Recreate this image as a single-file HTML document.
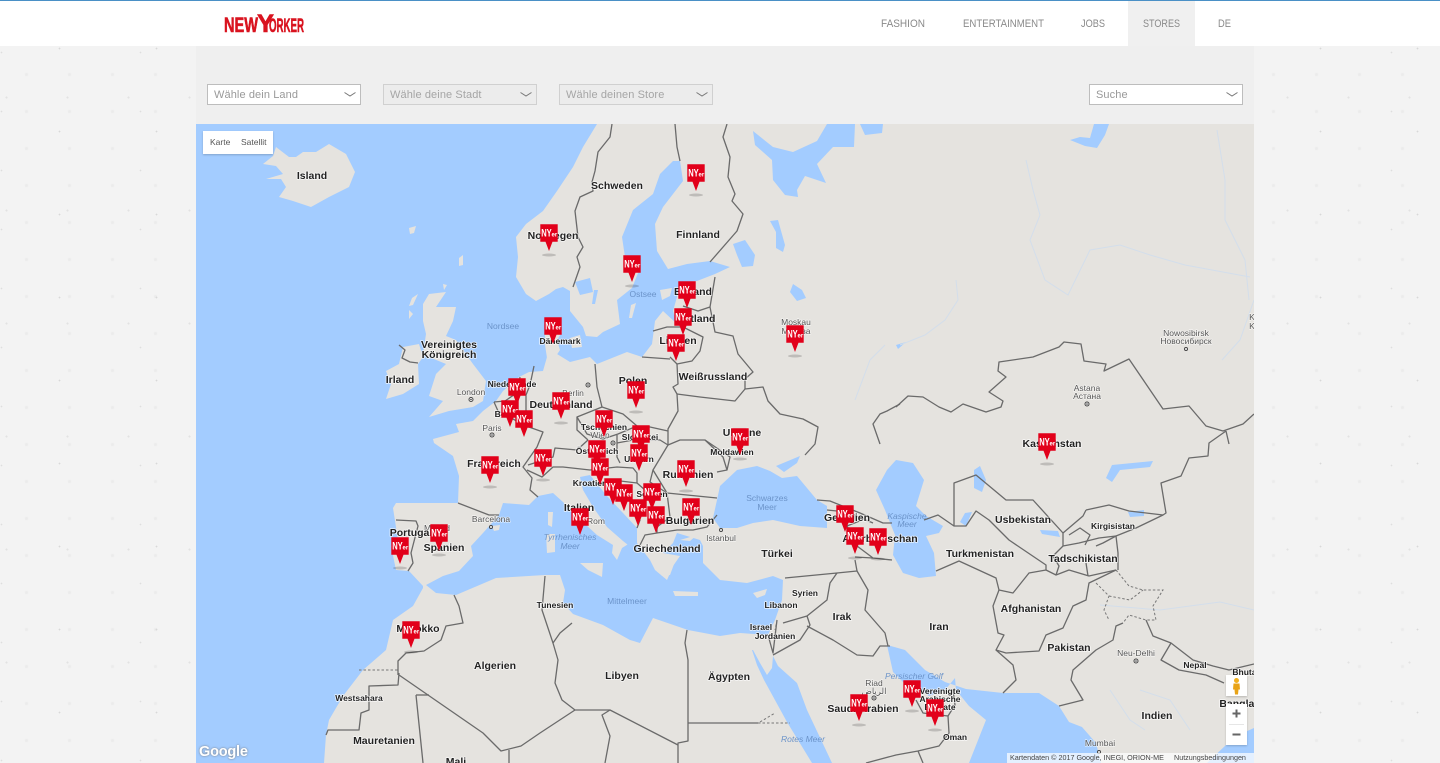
<!DOCTYPE html>
<html lang="de"><head><meta charset="utf-8"><title>NEW YORKER Stores</title>
<style>
html,body{margin:0;padding:0;width:1440px;height:763px;overflow:hidden}
body{position:relative;font-family:"Liberation Sans","Noto Sans CJK SC",sans-serif;background-color:#f3f3f3;
background-image:radial-gradient(circle,#d8d8d8 0,#d8d8d8 .7px,transparent 1px),radial-gradient(circle,#e2e2e2 0,#e2e2e2 .8px,transparent 1.2px),radial-gradient(circle,#dedede 0,#dedede .6px,transparent 1px),radial-gradient(circle,#ebebeb 0,#ebebeb 1.2px,transparent 2px);
background-size:97px 83px,61px 113px,139px 59px,43px 37px;background-position:11px 7px,37px 41px,71px 23px,5px 19px}
#hd{position:absolute;left:0;top:0;width:1440px;height:46px;background:#fff;border-top:1px solid #4a90c6;box-sizing:border-box}
#col{position:absolute;left:196px;top:46px;width:1058px;height:78px;background:#efefef}
#act{position:absolute;left:1128px;top:1px;width:67px;height:45px;background:#f0f0f0}
.sel{position:absolute;top:84px;width:154px;height:21px;box-sizing:border-box;border:1px solid #bdbdbd;background:#fff;color:#999;font-size:11px;line-height:20px;padding-left:6px;letter-spacing:.1px}
.sel.dis{background:#ececec;border-color:#d0d0d0;color:#a5a5a5}
.sel svg{position:absolute;right:4px;top:7px}
#map{position:absolute;left:196px;top:124px;width:1058px;height:639px;display:block;background:#e5e3df}
#map text{font-family:"Liberation Sans","Noto Sans CJK SC",sans-serif;text-anchor:middle;paint-order:stroke;stroke-linejoin:round}
#map .c{font-size:10.5px;font-weight:bold;fill:#222;stroke:#fff;stroke-width:1.6px;stroke-opacity:.75}
#map .s{font-size:8.5px;font-weight:bold;fill:#222;stroke:#fff;stroke-width:1.6px;stroke-opacity:.75}
#map .g{font-size:8.5px;fill:#555;stroke:#fff;stroke-width:1.4px;stroke-opacity:.6}
#map .w{font-size:8.5px;fill:#6b93c9}
.l{fill:#e5e3df;stroke:none}.a{fill:#a3ccff;stroke:none}
.b{fill:none;stroke:#6a6a6a;stroke-width:1.3;stroke-linejoin:round}
.dsh{fill:none;stroke:#777;stroke-width:1;stroke-dasharray:2.5 2}
.r{fill:none;stroke:#d3deeb;stroke-width:1}
.p{fill:#e2001a}
#map .n{font-size:11px;font-weight:bold;fill:#fff;text-anchor:start;stroke:none}
#map .t{font-size:6px;font-weight:bold;fill:#fff;text-anchor:start;stroke:none}
.ctl{position:absolute;background:#fff;box-shadow:0 1px 2px rgba(0,0,0,.2)}
</style></head><body>
<div id="hd"></div><div id="act"></div><div id="col"></div>

<svg style="position:absolute;left:0;top:0" width="1440" height="46">
<g font-family="Liberation Sans" font-weight="bold" fill="#d9131f" stroke="#d9131f" stroke-width=".6">
<text x="224" y="32" font-size="21" textLength="34" lengthAdjust="spacingAndGlyphs">NEW</text>
<text x="257" y="32" font-size="25" textLength="17" lengthAdjust="spacingAndGlyphs">Y</text>
<text x="269" y="32" font-size="19" textLength="35" lengthAdjust="spacingAndGlyphs">ORKER</text>
</g>
<g font-family="Liberation Sans" font-size="11" fill="#8a8a8a">
<text x="881" y="27" textLength="44" lengthAdjust="spacingAndGlyphs">FASHION</text>
<text x="963" y="27" textLength="81" lengthAdjust="spacingAndGlyphs">ENTERTAINMENT</text>
<text x="1081" y="27" textLength="24" lengthAdjust="spacingAndGlyphs">JOBS</text>
<text x="1143" y="27" textLength="37" lengthAdjust="spacingAndGlyphs">STORES</text>
<text x="1218" y="27" textLength="13" lengthAdjust="spacingAndGlyphs">DE</text>
</g></svg>

<div class="sel" style="left:207px">Wähle dein Land<svg width="12" height="6"><path d="M.5.5 6 4 11.5.5" fill="none" stroke="#777"/></svg></div>
<div class="sel dis" style="left:383px">Wähle deine Stadt<svg width="12" height="6"><path d="M.5.5 6 4 11.5.5" fill="none" stroke="#777"/></svg></div>
<div class="sel dis" style="left:559px">Wähle deinen Store<svg width="12" height="6"><path d="M.5.5 6 4 11.5.5" fill="none" stroke="#777"/></svg></div>
<div class="sel" style="left:1089px">Suche<svg width="12" height="6"><path d="M.5.5 6 4 11.5.5" fill="none" stroke="#777"/></svg></div>

<svg id="map" viewBox="196 124 1058 639" width="1058" height="639">
<!-- water -->
<path class="a" d="M196 124H597L583 147 573 167 557 191 543 211 526 224 516 237 518 257 516 277 526 294 536 301 549 294 556 289 563 287 570 291 570 311 583 327 586 336 597 337 603 332 620 324 617 300 632 288 640 268 625 257 622 237 633 210 653 194 660 174 673 161 680 161 683 181 663 207 655 224 657 251 668 269 687 264 710 261 730 267 715 274 697 281 680 282 677 297 673 311 677 324 663 311 655 321 652 344 642 357 627 352 597 364 590 357 570 362 557 354 547 357 543 371 529 372 519 377 503 391 496 401 483 411 473 421 456 424 459 432 433 439 434 443 453 456 459 476 458 503 429 503 396 503 393 508 398 540 391 546 396 570 409 571 423 586 423 588 413 606 393 620 386 650 363 670 343 696 329 720 326 735 324 763H196Z"/>
<path class="a" d="M426 585 443 576 459 571 473 556 471 546 483 533 499 515 503 503 529 505 538 496 553 493 563 502 573 513 597 535 613 545 612 553 617 560 622 548 630 543 633 549 623 541 607 527 593 507 583 490 580 477 590 475 598 485 607 496 623 513 637 528 637 543 650 560 655 570 667 580 673 566 680 556 663 553 673 543 677 533 700 540 703 546 703 563 720 580 747 583 773 576 783 580 782 600 775 620 768 635 740 633 720 636 688 630 653 618 640 643 630 640 603 625 573 614 563 603 565 590 560 575 545 575 496 578 456 595 436 593Z"/>
<path class="a" d="M737 470 757 466 770 471 782 478 797 476 817 500 827 506 827 528 800 526 773 520 753 523 737 528 720 528 713 518 717 500 720 486Z"/>
<path class="a" d="M776 466 800 456 797 463 784 472Z"/>
<path class="a" d="M752 650 757 665 764 680 787 722 812 763H832L807 710 797 683 778 666 773 656 772 668 767 675 760 663 753 650Z"/>
<path class="a" d="M876 490 887 470 896 460 913 463 924 480 916 506 926 516 943 526 939 533 926 536 934 553 936 576 919 578 903 573 893 555 895 535 885 510Z"/>
<path class="a" d="M887 645 905 650 925 670 945 682 966 689 1003 693 1039 693 1059 706 1069 722 1082 727 1096 743 1101 763H969L986 720 969 706 956 690 955 678 945 690 929 696 918 688 905 684 893 672Z"/>
<path class="a" d="M1207 763 1226 745 1245 732 1254 728V763Z"/>
<path class="a" d="M753 131 773 147 793 152 817 141 827 124H855L854 147 833 147 817 164 826 183 805 176 797 190 798 197 785 195 773 180 772 160 755 145Z"/>
<path class="a" d="M860 124H883L882 133 865 135Z"/>
<path class="a" d="M733 244 745 240 755 255 753 266 742 267 737 255Z"/>
<path class="a" d="M770 221 778 220 785 245 783 252 776 248 776 232Z"/>
<path class="a" d="M793 284 802 290 806 298 797 301 790 292Z"/>
<path class="a" d="M1094 124 1109 124 1105 135 1097 148 1085 146 1070 140 1080 137 1090 138Z"/>
<path class="a" d="M575 282 590 278 593 292 580 295Z"/>
<path class="a" d="M594 290 598 290 595 304 592 304Z"/>
<path class="a" d="M974 470 980 466 986 480 982 492 974 488Z"/>
<path class="a" d="M1106 478 1112 465 1153 461 1150 467 1120 470 1112 482Z"/>
<path class="a" d="M1128 512 1144 510 1144 516 1130 517Z"/>
<path class="a" d="M960 522 965 513 972 512 966 526Z"/>
<path class="a" d="M1040 530 1058 531 1060 537 1042 534Z"/>
<path class="a" d="M896 345 906 342 898 349Z"/>
<!-- land islands -->
<path class="l" d="M263 164 273 156 276 147 289 157 296 157 303 152 316 152 329 144 346 154 355 172 349 187 329 197 311 207 293 201 279 197 286 187 281 179 266 179 283 174 276 166Z"/>
<path class="l" d="M429 294 446 292 436 307 456 307 453 321 446 336 456 340 473 364 486 381 483 401 473 407 449 411 429 417 443 401 429 396 436 374 446 364 429 357 423 354 426 334 423 321 423 304Z"/>
<path class="l" d="M403 347 419 344 423 357 418 364 419 384 403 394 386 399 391 384 386 371 399 364Z"/>
<path class="l" d="M412 298 418 294 413 305 409 306Z"/>
<path class="l" d="M409 310 413 314 409 319Z"/>
<path class="l" d="M443 284 447 285 444 290Z"/>
<path class="l" d="M409 228 416 226 414 233 410 234Z"/>
<path class="l" d="M459 258 463 255 463 265 459 266Z"/>
<path class="l" d="M545 322 558 318 562 332 557 340 560 350 556 356 547 358 545 345Z"/>
<path class="l" d="M570 338 580 335 582 347 572 348Z"/>
<path class="l" d="M631 305 636 303 632 318 629 318Z"/>
<path class="l" d="M660 290 672 288 670 296 662 300Z"/>
<path class="l" d="M548 512 553 512 552 527 548 525Z"/>
<path class="l" d="M546 534 555 534 555 552 547 553Z"/>
<path class="l" d="M580 563 603 563 602 577 588 570Z"/>
<path class="l" d="M673 591 698 592 698 596 675 596Z"/>
<path class="l" d="M753 593 767 589 765 595 757 598Z"/>
<path class="l" d="M492 526 500 525 499 530 494 531Z"/>
<path class="l" d="M654 565 668 556 677 556 670 575 662 576Z"/>
<path class="l" d="M680 540 697 535 690 541Z"/>
<!-- rivers -->
<path class="r" d="M1026 160 1033 190 1040 215 1030 240 1045 280 1068 295 1090 250 1120 245 1150 255 1185 265 1250 277"/>
<path class="r" d="M1217 130 1225 180 1225 220 1245 260 1249 300"/>
<path class="r" d="M956 280 958 300 945 320 925 335 900 345"/>
<path class="r" d="M855 400 870 360 885 345"/>
<path class="r" d="M1100 605 1160 610 1220 602 1254 610"/>
<path class="r" d="M1140 690 1170 700 1190 730"/>
<path class="r" d="M1110 690 1130 720 1145 730"/>
<path class="r" d="M1254 300 1240 340 1222 360"/>
<!-- borders -->
<g>
<polyline class="b" points="612,124 610,137 598,152 595,171 592,182 593,191 580,197 575,211 578,237 583,247 577,257 580,267 573,287"/>
<polyline class="b" points="675,124 677,147 680,161"/>
<polyline class="b" points="727,124 723,137 730,157 728,177 735,194 732,201 743,214 737,231 710,262"/>
<polyline class="b" points="715,277 710,307 715,332 733,336 738,354 753,372 745,379 745,389 763,387 768,401 780,414 803,419 818,427 815,444 805,455"/>
<polyline class="b" points="683,306 698,311 710,307"/>
<polyline class="b" points="653,331 667,327 683,327 703,337 700,351 692,361 677,364 670,357"/>
<polyline class="b" points="642,357 670,359"/>
<polyline class="b" points="677,364 678,384 673,387 677,394 678,411 668,429 668,445"/>
<polyline class="b" points="677,394 700,397 735,401 745,389"/>
<polyline class="b" points="900,404 887,411 880,414 873,424 880,444"/>
<polyline class="b" points="896,407 908,396 923,397 939,407 951,412 963,404 986,412 1001,407 1003,401 989,392 1006,377 998,371 999,362 1033,357 1059,347 1064,342 1081,344 1084,361 1106,364 1104,371 1129,359 1163,409 1189,406 1206,426 1223,431 1243,424 1254,414"/>
<polyline class="b" points="1226,431 1209,443 1208,456 1189,458 1181,476 1161,483 1166,513 1163,515 1136,528 1116,536 1103,543 1096,546"/>
<polyline class="b" points="1226,431 1229,444"/>
<polyline class="b" points="1086,510 1109,505 1129,511 1163,515"/>
<polyline class="b" points="954,526 954,483 976,475 1006,500 1033,500 1063,533 1083,516 1086,510"/>
<polyline class="b" points="924,520 938,515 954,526 966,526 976,511 989,520 1009,540 1046,565 1046,570 1056,575 1069,570 1089,576 1116,570"/>
<polyline class="b" points="936,571 959,561 996,578 999,590 1013,593 1029,573 1046,570"/>
<polyline class="b" points="999,590 993,606 998,633 1004,635 996,650 1006,653 1039,651 1046,635 1063,628 1073,606 1086,600 1089,583 1116,570"/>
<polyline class="b" points="996,650 1013,665 1016,680 1003,693"/>
<polyline class="b" points="1063,533 1063,546 1053,556 1059,566 1056,575"/>
<polyline class="b" points="1063,546 1079,543 1099,538 1116,536 1118,553 1118,570"/>
<polyline class="b" points="1069,535 1080,528 1090,535 1085,545"/>
<polyline class="b" points="1086,563 1088,576"/>
<polyline class="b" points="1123,623 1116,626 1113,640 1096,650 1073,670 1071,680 1083,700 1059,706"/>
<polyline class="b" points="1146,620 1153,636 1171,643 1193,660 1213,666 1229,670 1254,664"/>
<polyline class="b" points="1171,643 1161,660 1179,670 1206,675 1224,683"/>
<polyline class="dsh" points="1116,570 1129,586 1143,590 1163,590 1153,606 1156,620 1146,620 1129,615 1123,623"/>
<polyline class="dsh" points="1096,583 1109,596 1104,610 1109,620"/>
<polyline class="dsh" points="1109,596 1130,600 1143,590"/>
<polyline class="b" points="916,700 923,713 948,716 949,733 939,746 918,751 896,755 866,763"/>
<polyline class="b" points="918,751 923,763"/>
<polyline class="b" points="948,716 955,705 953,690"/>
<polyline class="b" points="807,626 833,640 857,655 873,656 880,646 890,646"/>
<polyline class="b" points="807,616 827,600 830,583 837,573 785,578"/>
<polyline class="b" points="807,616 810,625 800,640 773,655"/>
<polyline class="b" points="783,623 807,616"/>
<polyline class="b" points="837,573 857,571 855,560"/>
<polyline class="b" points="857,571 868,590 865,610 885,633 888,646"/>
<polyline class="b" points="768,635 773,653 777,620"/>
<polyline class="dsh" points="777,620 775,630"/>
<polyline class="b" points="687,630 685,643 688,660 688,741 678,743 678,763"/>
<polyline class="b" points="688,723 758,723"/>
<polyline class="dsh" points="758,723 790,723"/>
<polyline class="dsh" points="760,722 775,713"/>
<polyline class="b" points="678,745 610,710 602,715 610,736 605,763"/>
<polyline class="b" points="610,710 575,710 562,700 555,683 558,660 553,643 560,633 572,623"/>
<polyline class="b" points="545,576 542,610 553,643"/>
<polyline class="b" points="575,710 540,733 521,746 501,751 483,733 399,675"/>
<polyline class="b" points="416,695 429,695"/>
<polyline class="b" points="416,695 423,763"/>
<polyline class="b" points="509,750 509,763"/>
<polyline class="b" points="399,673 398,685 369,686 369,710 361,713 359,730 328,730 326,735"/>
<polyline class="dsh" points="359,670 398,670"/>
<polyline class="b" points="454,595 459,606 463,623 446,626 441,640 424,651 406,653 398,661 398,675"/>
<polyline class="b" points="458,503 489,515 499,515"/>
<polyline class="b" points="396,520 416,521 418,526 411,553 413,563 408,571"/>
<polyline class="b" points="494,402 498,411 526,426 543,432 537,447 523,467 532,478 530,490 538,497"/>
<polyline class="b" points="528,465 553,457 555,448 577,450 588,440"/>
<polyline class="b" points="527,470 542,477 553,467 563,467 590,470 617,467 633,468 637,473 637,483 653,497"/>
<polyline class="b" points="520,377 518,392 505,401 494,402"/>
<polyline class="b" points="534,366 530,385 526,395 526,426"/>
<polyline class="b" points="595,364 597,387 602,407 623,414 637,426 650,427 668,431"/>
<polyline class="b" points="602,407 577,417 587,434 603,439 618,434 637,426"/>
<polyline class="b" points="577,417 577,430 588,440"/>
<polyline class="b" points="617,435 617,457 620,463"/>
<polyline class="b" points="617,443 633,440 660,440 668,445 653,470 667,493 717,498"/>
<polyline class="b" points="668,445 680,440 705,440 723,457 727,470 717,472"/>
<polyline class="b" points="705,440 730,457 727,470"/>
<polyline class="b" points="653,470 650,482 667,493 670,517 657,527 657,533 677,530 693,530 707,527 717,515"/>
<polyline class="b" points="598,485 612,480 637,483"/>
<polyline class="b" points="623,490 637,505 640,520 637,528"/>
<polyline class="b" points="657,533 645,535 640,545"/>
<polyline class="b" points="817,500 830,501 860,513 883,523 892,523"/>
<polyline class="b" points="827,510 847,512 873,523"/>
<polyline class="b" points="847,526 857,546 873,558 892,560"/>
<polyline class="b" points="847,526 862,520"/>
<polyline class="b" points="855,557 873,558"/>
<polyline class="b" points="399,345 405,350 402,358 410,362 418,363"/>
</g>
<!-- labels -->
<text class="c" x="312" y="179">Island</text>
<text class="c" x="617" y="189">Schweden</text>
<text class="c" x="553" y="239">Norwegen</text>
<text class="c" x="698" y="238">Finnland</text>
<text class="c" x="693" y="295">Estland</text>
<text class="c" x="695" y="322">Lettland</text>
<text class="c" x="678" y="344">Litauen</text>
<text class="c" x="713" y="380">Weißrussland</text>
<text class="c" x="633" y="384">Polen</text>
<text class="s" x="560" y="344">Dänemark</text>
<text class="c" x="449" y="348">Vereinigtes</text>
<text class="c" x="449" y="358">Königreich</text>
<text class="c" x="400" y="383">Irland</text>
<text class="s" x="512" y="387">Niederlande</text>
<text class="g" x="471" y="395">London</text>
<text class="g" x="492" y="431">Paris</text>
<text class="g" x="573" y="396">Berlin</text>
<text class="c" x="561" y="408">Deutschland</text>
<text class="s" x="510" y="417">Belgien</text>
<text class="s" x="604" y="430">Tschechien</text>
<text class="g" x="600" y="438">Wien</text>
<text class="s" x="597" y="454">Österreich</text>
<text class="s" x="640" y="440">Slowakei</text>
<text class="s" x="639" y="462">Ungarn</text>
<text class="s" x="732" y="455">Moldawien</text>
<text class="c" x="742" y="436">Ukraine</text>
<text class="c" x="494" y="467">Frankreich</text>
<text class="c" x="688" y="478">Rumänien</text>
<text class="s" x="590" y="486">Kroatien</text>
<text class="s" x="652" y="497">Serbien</text>
<text class="c" x="579" y="511">Italien</text>
<text class="g" x="596" y="524">Rom</text>
<text class="g" x="491" y="522">Barcelona</text>
<text class="c" x="444" y="551">Spanien</text>
<text class="g" x="437" y="531">Madrid</text>
<text class="c" x="411" y="536">Portugal</text>
<text class="c" x="667" y="552">Griechenland</text>
<text class="c" x="690" y="524">Bulgarien</text>
<text class="g" x="721" y="541">Istanbul</text>
<text class="c" x="777" y="557">Türkei</text>
<text class="c" x="847" y="521">Georgien</text>
<text class="c" x="880" y="542">Aserbaidschan</text>
<text class="s" x="805" y="596">Syrien</text>
<text class="s" x="781" y="608">Libanon</text>
<text class="s" x="761" y="630">Israel</text>
<text class="s" x="775" y="639">Jordanien</text>
<text class="c" x="842" y="620">Irak</text>
<text class="c" x="939" y="630">Iran</text>
<text class="c" x="980" y="557">Turkmenistan</text>
<text class="c" x="1023" y="523">Usbekistan</text>
<text class="s" x="1113" y="529">Kirgisistan</text>
<text class="c" x="1083" y="562">Tadschikistan</text>
<text class="c" x="1052" y="447">Kasachstan</text>
<text class="c" x="1031" y="612">Afghanistan</text>
<text class="c" x="1069" y="651">Pakistan</text>
<text class="g" x="1136" y="656">Neu-Delhi</text>
<text class="s" x="1195" y="668">Nepal</text>
<text class="s" x="1247" y="675">Bhutan</text>
<text class="c" x="1252" y="707">Bangladesch</text>
<text class="c" x="1157" y="719">Indien</text>
<text class="g" x="1100" y="746">Mumbai</text>
<text class="g" x="796" y="325">Moskau</text>
<text class="g" x="796" y="334">Москва</text>
<text class="g" x="1087" y="391">Astana</text>
<text class="g" x="1087" y="399">Астана</text>
<text class="g" x="1186" y="336">Nowosibirsk</text>
<text class="g" x="1186" y="344">Новосибирск</text>
<text class="g" x="1252" y="320">K</text>
<text class="g" x="1252" y="329">K</text>
<text class="c" x="729" y="680">Ägypten</text>
<text class="c" x="622" y="679">Libyen</text>
<text class="c" x="495" y="669">Algerien</text>
<text class="s" x="555" y="608">Tunesien</text>
<text class="s" x="359" y="701">Westsahara</text>
<text class="c" x="384" y="744">Mauretanien</text>
<text class="c" x="456" y="765">Mali</text>
<text class="c" x="418" y="632">Marokko</text>
<text class="c" x="863" y="712">Saudi-Arabien</text>
<text class="g" x="874" y="686">Riad</text>
<text class="g" x="874" y="694">الرياض</text>
<text class="s" x="940" y="694">Vereinigte</text>
<text class="s" x="940" y="702">Arabische</text>
<text class="s" x="940" y="710">Emirate</text>
<text class="s" x="955" y="740">Oman</text>
<text class="w" x="503" y="329">Nordsee</text>
<text class="w" x="643" y="297">Ostsee</text>
<text class="w" x="570" y="540" font-style="italic">Tyrrhenisches</text>
<text class="w" x="570" y="549" font-style="italic">Meer</text>
<text class="w" x="627" y="604">Mittelmeer</text>
<text class="w" x="767" y="501">Schwarzes</text>
<text class="w" x="767" y="510">Meer</text>
<text class="w" x="907" y="519" font-style="italic">Kaspische</text>
<text class="w" x="907" y="527" font-style="italic">Meer</text>
<text class="w" x="914" y="679" font-style="italic">Persischer Golf</text>
<text class="w" x="803" y="742" font-style="italic">Rotes Meer</text>
<!-- city dots -->
<g fill="#fff" stroke="#444" stroke-width="1">
<circle cx="471" cy="399.5" r="2"/><circle cx="492" cy="435" r="2"/><circle cx="588" cy="385" r="2"/><circle cx="613" cy="443" r="2"/><circle cx="491" cy="527" r="1.5"/><circle cx="721" cy="530" r="1.5"/><circle cx="1087" cy="404" r="2"/><circle cx="1186" cy="349" r="1.5"/><circle cx="1136" cy="661" r="2"/><circle cx="874" cy="698" r="2"/><circle cx="1099" cy="752" r="1.5"/>
</g>
<g fill="#333"><circle cx="471" cy="399.5" r=".8"/><circle cx="492" cy="435" r=".8"/><circle cx="588" cy="385" r=".8"/><circle cx="613" cy="443" r=".8"/><circle cx="1087" cy="404" r=".8"/><circle cx="1136" cy="661" r=".8"/><circle cx="874" cy="698" r=".8"/></g>
<!-- pins -->
<g fill="#000" fill-opacity=".17">
<ellipse cx="696" cy="195" rx="7" ry="1.5"/><ellipse cx="549" cy="255" rx="7" ry="1.5"/><ellipse cx="632" cy="286" rx="7" ry="1.5"/><ellipse cx="795" cy="356" rx="7" ry="1.5"/><ellipse cx="636" cy="412" rx="7" ry="1.5"/><ellipse cx="561" cy="423" rx="7" ry="1.5"/><ellipse cx="490" cy="487" rx="7" ry="1.5"/><ellipse cx="543" cy="480" rx="7" ry="1.5"/><ellipse cx="686" cy="491" rx="7" ry="1.5"/><ellipse cx="740" cy="459" rx="7" ry="1.5"/><ellipse cx="439" cy="555" rx="7" ry="1.5"/><ellipse cx="400" cy="568" rx="7" ry="1.5"/><ellipse cx="411" cy="652" rx="7" ry="1.5"/><ellipse cx="1047" cy="464" rx="7" ry="1.5"/><ellipse cx="859" cy="725" rx="7" ry="1.5"/><ellipse cx="912" cy="711" rx="7" ry="1.5"/><ellipse cx="935" cy="730" rx="7" ry="1.5"/><ellipse cx="878" cy="559" rx="7" ry="1.5"/><ellipse cx="855" cy="558" rx="7" ry="1.5"/>
</g>
<g transform="translate(696,173)"><path class="p" d="M-8.7-8.700H8.700V8.700H3.500L0 18-3.500 8.700H-8.700Z"/><text class="n" x="-7.800" y="3.500" textLength="10.500" lengthAdjust="spacingAndGlyphs">NY</text><text class="t" x="2.500" y="3.500">er</text></g>
<g transform="translate(549,233)"><path class="p" d="M-8.7-8.700H8.700V8.700H3.500L0 18-3.500 8.700H-8.700Z"/><text class="n" x="-7.800" y="3.500" textLength="10.500" lengthAdjust="spacingAndGlyphs">NY</text><text class="t" x="2.500" y="3.500">er</text></g>
<g transform="translate(632,264)"><path class="p" d="M-8.7-8.700H8.700V8.700H3.500L0 18-3.500 8.700H-8.700Z"/><text class="n" x="-7.800" y="3.500" textLength="10.500" lengthAdjust="spacingAndGlyphs">NY</text><text class="t" x="2.500" y="3.500">er</text></g>
<g transform="translate(687,290)"><path class="p" d="M-8.7-8.700H8.700V8.700H3.500L0 18-3.500 8.700H-8.700Z"/><text class="n" x="-7.800" y="3.500" textLength="10.500" lengthAdjust="spacingAndGlyphs">NY</text><text class="t" x="2.500" y="3.500">er</text></g>
<g transform="translate(683,317)"><path class="p" d="M-8.7-8.700H8.700V8.700H3.500L0 18-3.500 8.700H-8.700Z"/><text class="n" x="-7.800" y="3.500" textLength="10.500" lengthAdjust="spacingAndGlyphs">NY</text><text class="t" x="2.500" y="3.500">er</text></g>
<g transform="translate(676,343)"><path class="p" d="M-8.7-8.700H8.700V8.700H3.500L0 18-3.500 8.700H-8.700Z"/><text class="n" x="-7.800" y="3.500" textLength="10.500" lengthAdjust="spacingAndGlyphs">NY</text><text class="t" x="2.500" y="3.500">er</text></g>
<g transform="translate(553,326)"><path class="p" d="M-8.7-8.700H8.700V8.700H3.500L0 18-3.500 8.700H-8.700Z"/><text class="n" x="-7.800" y="3.500" textLength="10.500" lengthAdjust="spacingAndGlyphs">NY</text><text class="t" x="2.500" y="3.500">er</text></g>
<g transform="translate(795,334)"><path class="p" d="M-8.7-8.700H8.700V8.700H3.500L0 18-3.500 8.700H-8.700Z"/><text class="n" x="-7.800" y="3.500" textLength="10.500" lengthAdjust="spacingAndGlyphs">NY</text><text class="t" x="2.500" y="3.500">er</text></g>
<g transform="translate(636,390)"><path class="p" d="M-8.7-8.700H8.700V8.700H3.500L0 18-3.500 8.700H-8.700Z"/><text class="n" x="-7.800" y="3.500" textLength="10.500" lengthAdjust="spacingAndGlyphs">NY</text><text class="t" x="2.500" y="3.500">er</text></g>
<g transform="translate(517,387)"><path class="p" d="M-8.7-8.700H8.700V8.700H3.500L0 18-3.500 8.700H-8.700Z"/><text class="n" x="-7.800" y="3.500" textLength="10.500" lengthAdjust="spacingAndGlyphs">NY</text><text class="t" x="2.500" y="3.500">er</text></g>
<g transform="translate(510,409)"><path class="p" d="M-8.7-8.700H8.700V8.700H3.500L0 18-3.500 8.700H-8.700Z"/><text class="n" x="-7.800" y="3.500" textLength="10.500" lengthAdjust="spacingAndGlyphs">NY</text><text class="t" x="2.500" y="3.500">er</text></g>
<g transform="translate(524,419)"><path class="p" d="M-8.7-8.700H8.700V8.700H3.500L0 18-3.500 8.700H-8.700Z"/><text class="n" x="-7.800" y="3.500" textLength="10.500" lengthAdjust="spacingAndGlyphs">NY</text><text class="t" x="2.500" y="3.500">er</text></g>
<g transform="translate(561,401)"><path class="p" d="M-8.7-8.700H8.700V8.700H3.500L0 18-3.500 8.700H-8.700Z"/><text class="n" x="-7.800" y="3.500" textLength="10.500" lengthAdjust="spacingAndGlyphs">NY</text><text class="t" x="2.500" y="3.500">er</text></g>
<g transform="translate(604,419)"><path class="p" d="M-8.7-8.700H8.700V8.700H3.500L0 18-3.500 8.700H-8.700Z"/><text class="n" x="-7.800" y="3.500" textLength="10.500" lengthAdjust="spacingAndGlyphs">NY</text><text class="t" x="2.500" y="3.500">er</text></g>
<g transform="translate(641,434)"><path class="p" d="M-8.7-8.700H8.700V8.700H3.500L0 18-3.500 8.700H-8.700Z"/><text class="n" x="-7.800" y="3.500" textLength="10.500" lengthAdjust="spacingAndGlyphs">NY</text><text class="t" x="2.500" y="3.500">er</text></g>
<g transform="translate(639,453)"><path class="p" d="M-8.7-8.700H8.700V8.700H3.500L0 18-3.500 8.700H-8.700Z"/><text class="n" x="-7.800" y="3.500" textLength="10.500" lengthAdjust="spacingAndGlyphs">NY</text><text class="t" x="2.500" y="3.500">er</text></g>
<g transform="translate(597,449)"><path class="p" d="M-8.7-8.700H8.700V8.700H3.500L0 18-3.500 8.700H-8.700Z"/><text class="n" x="-7.800" y="3.500" textLength="10.500" lengthAdjust="spacingAndGlyphs">NY</text><text class="t" x="2.500" y="3.500">er</text></g>
<g transform="translate(600,467)"><path class="p" d="M-8.7-8.700H8.700V8.700H3.500L0 18-3.500 8.700H-8.700Z"/><text class="n" x="-7.800" y="3.500" textLength="10.500" lengthAdjust="spacingAndGlyphs">NY</text><text class="t" x="2.500" y="3.500">er</text></g>
<g transform="translate(740,437)"><path class="p" d="M-8.7-8.700H8.700V8.700H3.500L0 18-3.500 8.700H-8.700Z"/><text class="n" x="-7.800" y="3.500" textLength="10.500" lengthAdjust="spacingAndGlyphs">NY</text><text class="t" x="2.500" y="3.500">er</text></g>
<g transform="translate(686,469)"><path class="p" d="M-8.7-8.700H8.700V8.700H3.500L0 18-3.500 8.700H-8.700Z"/><text class="n" x="-7.800" y="3.500" textLength="10.500" lengthAdjust="spacingAndGlyphs">NY</text><text class="t" x="2.500" y="3.500">er</text></g>
<g transform="translate(490,465)"><path class="p" d="M-8.7-8.700H8.700V8.700H3.500L0 18-3.500 8.700H-8.700Z"/><text class="n" x="-7.800" y="3.500" textLength="10.500" lengthAdjust="spacingAndGlyphs">NY</text><text class="t" x="2.500" y="3.500">er</text></g>
<g transform="translate(543,458)"><path class="p" d="M-8.7-8.700H8.700V8.700H3.500L0 18-3.500 8.700H-8.700Z"/><text class="n" x="-7.800" y="3.500" textLength="10.500" lengthAdjust="spacingAndGlyphs">NY</text><text class="t" x="2.500" y="3.500">er</text></g>
<g transform="translate(613,487)"><path class="p" d="M-8.7-8.700H8.700V8.700H3.500L0 18-3.500 8.700H-8.700Z"/><text class="n" x="-7.800" y="3.500" textLength="10.500" lengthAdjust="spacingAndGlyphs">NY</text><text class="t" x="2.500" y="3.500">er</text></g>
<g transform="translate(624,493)"><path class="p" d="M-8.7-8.700H8.700V8.700H3.500L0 18-3.500 8.700H-8.700Z"/><text class="n" x="-7.800" y="3.500" textLength="10.500" lengthAdjust="spacingAndGlyphs">NY</text><text class="t" x="2.500" y="3.500">er</text></g>
<g transform="translate(652,492)"><path class="p" d="M-8.7-8.700H8.700V8.700H3.500L0 18-3.500 8.700H-8.700Z"/><text class="n" x="-7.800" y="3.500" textLength="10.500" lengthAdjust="spacingAndGlyphs">NY</text><text class="t" x="2.500" y="3.500">er</text></g>
<g transform="translate(638,508)"><path class="p" d="M-8.7-8.700H8.700V8.700H3.500L0 18-3.500 8.700H-8.700Z"/><text class="n" x="-7.800" y="3.500" textLength="10.500" lengthAdjust="spacingAndGlyphs">NY</text><text class="t" x="2.500" y="3.500">er</text></g>
<g transform="translate(656,515)"><path class="p" d="M-8.7-8.700H8.700V8.700H3.500L0 18-3.500 8.700H-8.700Z"/><text class="n" x="-7.800" y="3.500" textLength="10.500" lengthAdjust="spacingAndGlyphs">NY</text><text class="t" x="2.500" y="3.500">er</text></g>
<g transform="translate(691,507)"><path class="p" d="M-8.7-8.700H8.700V8.700H3.500L0 18-3.500 8.700H-8.700Z"/><text class="n" x="-7.800" y="3.500" textLength="10.500" lengthAdjust="spacingAndGlyphs">NY</text><text class="t" x="2.500" y="3.500">er</text></g>
<g transform="translate(580,517)"><path class="p" d="M-8.7-8.700H8.700V8.700H3.500L0 18-3.500 8.700H-8.700Z"/><text class="n" x="-7.800" y="3.500" textLength="10.500" lengthAdjust="spacingAndGlyphs">NY</text><text class="t" x="2.500" y="3.500">er</text></g>
<g transform="translate(439,533)"><path class="p" d="M-8.7-8.700H8.700V8.700H3.500L0 18-3.500 8.700H-8.700Z"/><text class="n" x="-7.800" y="3.500" textLength="10.500" lengthAdjust="spacingAndGlyphs">NY</text><text class="t" x="2.500" y="3.500">er</text></g>
<g transform="translate(400,546)"><path class="p" d="M-8.7-8.700H8.700V8.700H3.500L0 18-3.500 8.700H-8.700Z"/><text class="n" x="-7.800" y="3.500" textLength="10.500" lengthAdjust="spacingAndGlyphs">NY</text><text class="t" x="2.500" y="3.500">er</text></g>
<g transform="translate(411,630)"><path class="p" d="M-8.7-8.700H8.700V8.700H3.500L0 18-3.500 8.700H-8.700Z"/><text class="n" x="-7.800" y="3.500" textLength="10.500" lengthAdjust="spacingAndGlyphs">NY</text><text class="t" x="2.500" y="3.500">er</text></g>
<g transform="translate(845,514)"><path class="p" d="M-8.7-8.700H8.700V8.700H3.500L0 18-3.500 8.700H-8.700Z"/><text class="n" x="-7.800" y="3.500" textLength="10.500" lengthAdjust="spacingAndGlyphs">NY</text><text class="t" x="2.500" y="3.500">er</text></g>
<g transform="translate(855,536)"><path class="p" d="M-8.7-8.700H8.700V8.700H3.500L0 18-3.500 8.700H-8.700Z"/><text class="n" x="-7.800" y="3.500" textLength="10.500" lengthAdjust="spacingAndGlyphs">NY</text><text class="t" x="2.500" y="3.500">er</text></g>
<g transform="translate(878,537)"><path class="p" d="M-8.7-8.700H8.700V8.700H3.500L0 18-3.500 8.700H-8.700Z"/><text class="n" x="-7.800" y="3.500" textLength="10.500" lengthAdjust="spacingAndGlyphs">NY</text><text class="t" x="2.500" y="3.500">er</text></g>
<g transform="translate(1047,442)"><path class="p" d="M-8.7-8.700H8.700V8.700H3.500L0 18-3.500 8.700H-8.700Z"/><text class="n" x="-7.800" y="3.500" textLength="10.500" lengthAdjust="spacingAndGlyphs">NY</text><text class="t" x="2.500" y="3.500">er</text></g>
<g transform="translate(859,703)"><path class="p" d="M-8.7-8.700H8.700V8.700H3.500L0 18-3.500 8.700H-8.700Z"/><text class="n" x="-7.800" y="3.500" textLength="10.500" lengthAdjust="spacingAndGlyphs">NY</text><text class="t" x="2.500" y="3.500">er</text></g>
<g transform="translate(912,689)"><path class="p" d="M-8.7-8.700H8.700V8.700H3.500L0 18-3.500 8.700H-8.700Z"/><text class="n" x="-7.800" y="3.500" textLength="10.500" lengthAdjust="spacingAndGlyphs">NY</text><text class="t" x="2.500" y="3.500">er</text></g>
<g transform="translate(935,708)"><path class="p" d="M-8.7-8.700H8.700V8.700H3.500L0 18-3.500 8.700H-8.700Z"/><text class="n" x="-7.800" y="3.500" textLength="10.500" lengthAdjust="spacingAndGlyphs">NY</text><text class="t" x="2.500" y="3.500">er</text></g>
</svg>

<div class="ctl" style="left:203px;top:131px;width:70px;height:23px;font-size:8.5px;color:#565656;line-height:23px"><span style="position:absolute;left:7px">Karte</span><span style="position:absolute;left:38px">Satellit</span></div>
<div class="ctl" style="left:1226px;top:675px;width:21px;height:21px"><svg width="21" height="21"><circle cx="10.5" cy="5.5" r="2.5" fill="#f2b01e"/><path d="M7.5 8.500h6l.5 6h-1.500l-.5 5h-3l-.5-5H7Z" fill="#e8a317"/></svg></div>
<div class="ctl" style="left:1226px;top:704px;width:21px;height:41px"><svg width="21" height="41"><path d="M6.500 9.500h8M10.500 5.500v8M6.500 30.500h8" stroke="#666" stroke-width="2" fill="none"/><path d="M3 20.500h15" stroke="#e6e6e6"/></svg></div>
<div style="position:absolute;left:199px;top:744px;font-size:14.5px;font-weight:bold;color:#fff;letter-spacing:-.2px;text-shadow:0 0 2px #777">Google</div>
<div style="position:absolute;left:1007px;top:753px;width:247px;height:10px;background:rgba(255,255,255,.7);font-size:7.2px;line-height:10px;color:#444;white-space:nowrap"><span style="position:absolute;left:3px">Kartendaten © 2017 Google, INEGI, ORION-ME</span><span style="position:absolute;left:167px">Nutzungsbedingungen</span></div>
</body></html>
